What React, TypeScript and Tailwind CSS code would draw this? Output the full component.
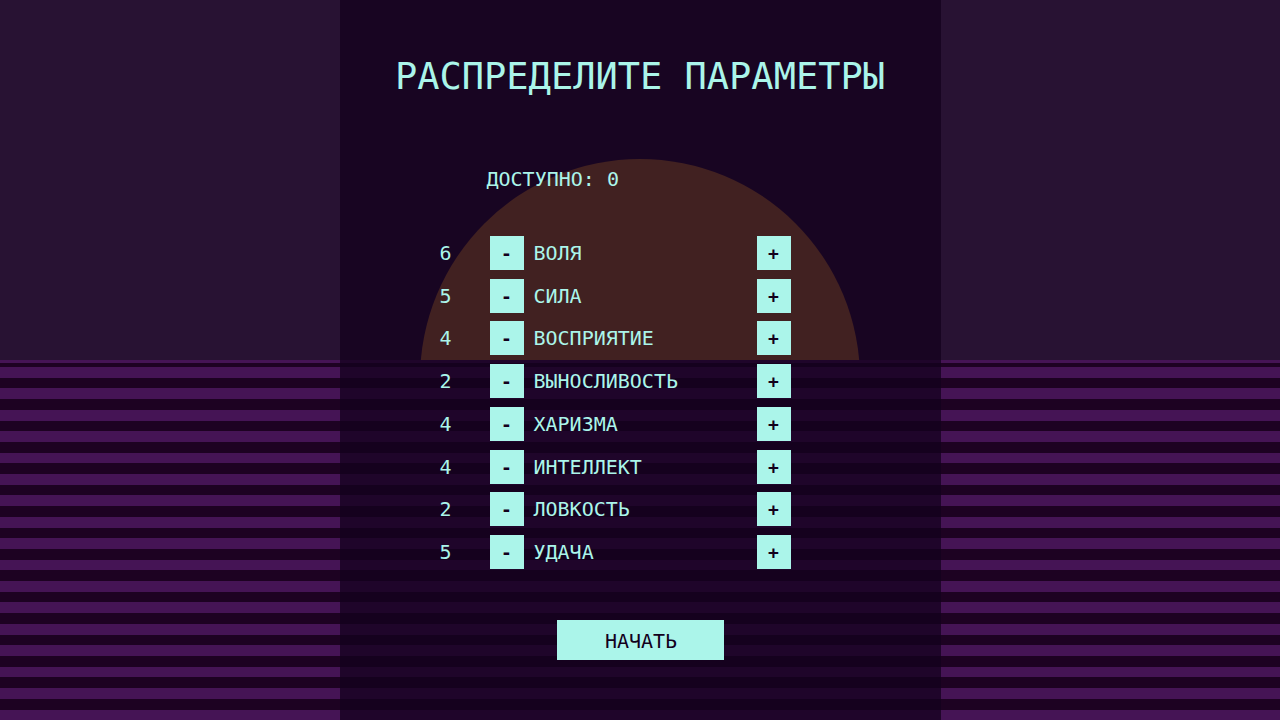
import { useState } from "react";

const initialStats = [
  { name: "ВОЛЯ", value: 6 },
  { name: "СИЛА", value: 5 },
  { name: "ВОСПРИЯТИЕ", value: 4 },
  { name: "ВЫНОСЛИВОСТЬ", value: 2 },
  { name: "ХАРИЗМА", value: 4 },
  { name: "ИНТЕЛЛЕКТ", value: 4 },
  { name: "ЛОВКОСТЬ", value: 2 },
  { name: "УДАЧА", value: 5 },
];

const bands = Array.from({ length: 33 }, (_, i) => i);

function Backdrop() {
  return (
    <div className="absolute inset-0 flex flex-col" aria-hidden="true">
      <div className="relative flex-1 overflow-hidden bg-[#281233]">
        <div className="absolute left-1/2 top-full size-[440px] -translate-x-1/2 -translate-y-[201px] rounded-full bg-[#ca8430]" />
      </div>
      <div className="flex flex-1 flex-col bg-[#1d0222]">
        <div className="mb-1 h-[3px] bg-[#451455]" />
        {bands.map((i) => (
          <div key={i} className={i % 2 === 0 ? "flex-1 bg-[#451455]" : "flex-1"} />
        ))}
      </div>
    </div>
  );
}

export default function App() {
  const [stats, setStats] = useState(initialStats);
  const [available, setAvailable] = useState(0);

  const change = (index: number, delta: number) => {
    if (delta > available || stats[index].value + delta < 1) return;
    setStats(stats.map((s, i) => (i === index ? { ...s, value: s.value + delta } : s)));
    setAvailable(available - delta);
  };

  return (
    <div className="relative min-h-screen font-['DejaVu_Sans_Mono',monospace] text-xl text-[#abf5ea]">
      <Backdrop />
      <main className="relative mx-auto flex min-h-screen w-full max-w-[601px] flex-col items-center bg-[#13001c]/75 pt-[53px]">
        <h1 className="text-center text-[37px] leading-[48px]">РАСПРЕДЕЛИТЕ ПАРАМЕТРЫ</h1>
        <div className="mt-16 w-full max-w-[401px] pr-[50px]">
          <p className="pl-[47px] leading-7">ДОСТУПНО: {available}</p>
          <ul className="mt-[43px] flex h-[333px] flex-col justify-between">
            {stats.map((stat, i) => (
              <li key={stat.name} className="flex items-center">
                <span className="w-[50px]">{stat.value}</span>
                <button
                  type="button"
                  aria-label={`Уменьшить: ${stat.name}`}
                  onClick={() => change(i, -1)}
                  className="size-[34px] bg-[#abf5ea] pt-0.5 text-lg font-bold text-[#13001c]"
                >
                  -
                </button>
                <span className="flex-1 pl-2.5">{stat.name}</span>
                <button
                  type="button"
                  aria-label={`Увеличить: ${stat.name}`}
                  onClick={() => change(i, 1)}
                  className="size-[34px] bg-[#abf5ea] pt-0.5 text-lg font-bold text-[#13001c]"
                >
                  +
                </button>
              </li>
            ))}
          </ul>
        </div>
        <button type="button" className="mt-[51px] h-10 w-[167px] bg-[#abf5ea] pl-0.5 pt-0.5 text-[#13001c]">
          НАЧАТЬ
        </button>
      </main>
    </div>
  );
}
